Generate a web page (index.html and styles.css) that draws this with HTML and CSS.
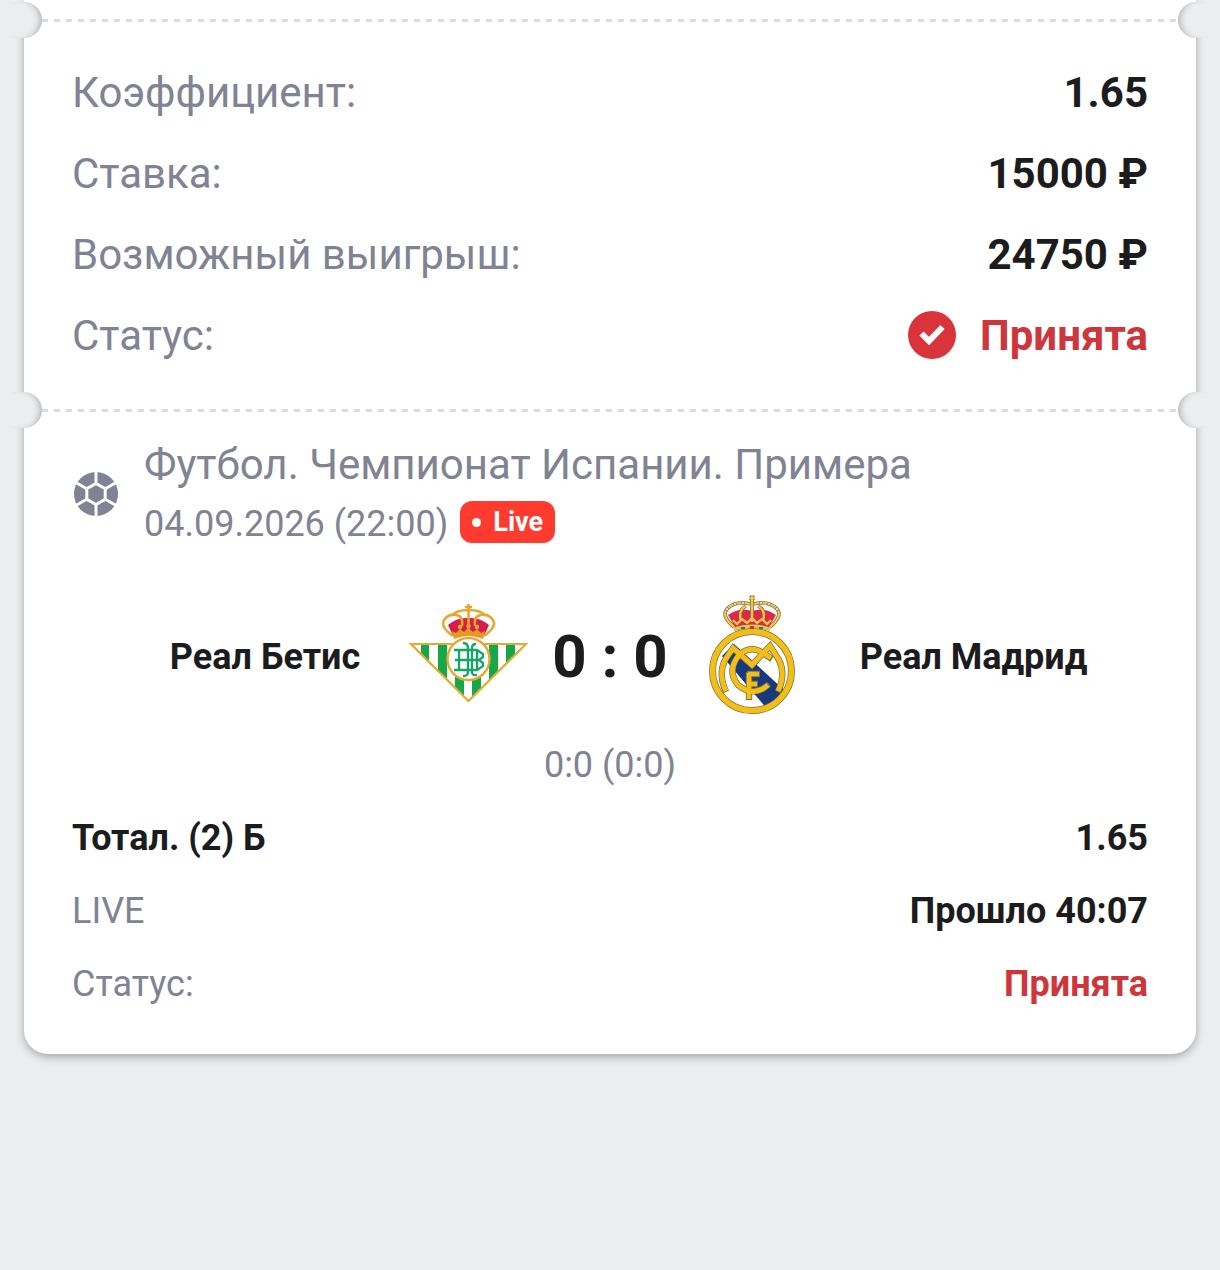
FILE: index.html
```html
<!DOCTYPE html>
<html lang="ru">
<head>
    <meta charset="UTF-8">
    <meta name="viewport" content="width=device-width, initial-scale=1.0">
    <title>Купон</title>
    <link rel="stylesheet" href="styles.css">
</head>
<body>
    <main class="ticket">
        <div class="divider"></div>

        <dl class="summary">
            <div class="row"><dt>Коэффициент:</dt><dd>1.65</dd></div>
            <div class="row"><dt>Ставка:</dt><dd>15000 ₽</dd></div>
            <div class="row"><dt>Возможный выигрыш:</dt><dd>24750 ₽</dd></div>
            <div class="row">
                <dt>Статус:</dt>
                <dd class="accepted">
                    <svg class="check" viewBox="0 0 48 48" aria-hidden="true">
                        <circle cx="24" cy="24" r="24" fill="#d9343a"/>
                        <path d="M13.500 22.500l7.500 7.500L34.500 16" fill="none" stroke="#fff" stroke-width="6"/>
                    </svg>
                    Принята
                </dd>
            </div>
        </dl>

        <div class="divider"></div>

        <section class="event">
            <header class="event-head">
                <svg class="ball" viewBox="0 0 48 48" aria-hidden="true">
                    <circle cx="24" cy="24" r="22" fill="#7f8393"/>
                    <g fill="none" stroke="#fff" stroke-width="3">
                        <path d="M24 13.500l9.200 5.200v10.600L24 34.500l-9.200-5.200V18.700z"/>
                        <path d="M24 13.500V0M33.200 18.700L46 11.500M33.200 29.300L46 36.500M24 34.500V48M14.800 29.300L2 36.500M14.800 18.700L2 11.500"/>
                    </g>
                </svg>
                <div class="event-info">
                    <div class="league">Футбол. Чемпионат Испании. Примера</div>
                    <div class="date">04.09.2026 (22:00) <span class="live">Live</span></div>
                </div>
            </header>

            <div class="match">
                <div class="team home">
                    <span class="name">Реал Бетис</span>
                    <svg class="crest" viewBox="0 0 120 120" aria-hidden="true">
                        <defs>
                            <clipPath id="pennant"><path d="M3 50H118L60.500 107z"/></clipPath>
                        </defs>
                        <path d="M3 50H118L60.500 107z" fill="#fff"/>
                        <path clip-path="url(#pennant)" fill="#14a84b" d="M13 50h8v58h-8zM30 50h9v58h-9zM47 50h9v58h-9zM64 50h9v58h-9zM81 50h9v58h-9zM98 50h9v58h-9z"/>
                        <path d="M3 50H118L60.500 107z" fill="none" stroke="#e5a932" stroke-width="2.200"/>
                        <circle cx="60.500" cy="65" r="21" fill="#fff" stroke="#e5a932" stroke-width="2.400"/>
                        <g fill="none" stroke="#14a567" stroke-width="2.300">
                            <path d="M46 56H69L75 60V63L71 66L75 69V72L69 76H46M47 66H71"/>
                            <path d="M51 56V76M55 49Q60 49 60 54V78Q60 82 55 82M68 50Q64 50 64 54V78Q64 82 69 81M69 56V76"/>
                        </g>
                        <path d="M40 31Q49 23 60.500 24Q72 23 81 31L76 42Q60 38 45 42z" fill="#d81e48"/>
                        <g fill="none" stroke="#e5a932" stroke-width="2.600">
                            <path d="M45 42Q32 33 36 26Q42 18 51 22Q55 24 54 32M76 42Q89 33 85 26Q79 18 70 22Q66 24 67 32"/>
                            <path d="M43 22Q48 16 60.500 16Q73 16 78 22M60.500 10V37M57 13H64"/>
                        </g>
                        <path d="M44 37l4 2 4-4 4 3 4-4 5 4 4-3 4 4 4-2-2 8Q60 39 46 45z" fill="#e39b24"/>
                        <g fill="#e5a932">
                            <circle cx="52" cy="33" r="2.200"/><circle cx="60.500" cy="32" r="2.200"/><circle cx="69" cy="33" r="2.200"/><circle cx="60.500" cy="16" r="2"/>
                        </g>
                    </svg>
                </div>
                <div class="score">0 : 0</div>
                <div class="team away">
                    <svg class="crest" viewBox="0 0 120 120" aria-hidden="true">
                        <defs>
                            <clipPath id="disc"><circle cx="60" cy="77" r="37"/></clipPath>
                        </defs>
                        <circle cx="60" cy="77" r="38" fill="#fff"/>
                        <path clip-path="url(#disc)" fill="#17397f" d="M30 62L42 50L92 96L76 116z"/>
                        <circle cx="60" cy="77" r="39.500" fill="none" stroke="#77704c" stroke-width="7"/>
                        <circle cx="60" cy="77" r="39.500" fill="none" stroke="#f3bf16" stroke-width="5.600"/>
                        <!-- monogram: dark contour first, gold on top -->
                        <g fill="none" stroke="#77704c" stroke-width="6.400">
                            <path d="M34 98Q26 80 33 66L41 54L60 71L78 52L87 66Q94 80 86 98"/>
                            <path d="M80 65L71 59Q60 51 48 60Q34 76 46 91Q62 104 77 90"/>
                            <path d="M57 78V106M55 80H68M57 90H66"/>
                        </g>
                        <g fill="none" stroke="#f3bf16" stroke-width="5">
                            <path d="M34 97Q26 80 33 66L41 54L60 71L78 52L87 66Q94 80 86 97"/>
                            <path d="M79 64L71 59Q60 51 48 60Q34 76 46 91Q62 104 76 91"/>
                            <path d="M57 79V105M56 80H67M57 90H65" stroke-width="4.600"/>
                        </g>
                        <path d="M36 21Q47 13 60 17Q73 13 84 21L77 33H43z" fill="#dc2945"/>
                        <g fill="none" stroke="#81683d" stroke-width="3.600">
                            <path d="M42 33Q29 22 35 15Q44 6 58 10M78 33Q91 22 85 15Q76 6 62 10M49 27Q46 16 54 12M71 27Q74 16 66 12M60 1V28M57 4H63M42 35Q60 29 78 35"/>
                        </g>
                        <g fill="none" stroke="#efc34c" stroke-width="2.300">
                            <path d="M42 33Q29 22 35 15Q44 6 58 10M78 33Q91 22 85 15Q76 6 62 10M49 27Q46 16 54 12M71 27Q74 16 66 12M60 1V28M57 4H63"/>
                            <path d="M42 35Q60 29 78 35" stroke-width="3"/>
                            <path d="M41 26l4 4 5-5 5 4 5-5 5 5 5-4 5 5 4-4"/>
                        </g>
                        <g fill="#fff" stroke="#9b8250">
                            <circle cx="35" cy="15" r="1.500"/><circle cx="43" cy="10" r="1.500"/><circle cx="51" cy="9" r="1.500"/><circle cx="69" cy="9" r="1.500"/><circle cx="77" cy="10" r="1.500"/><circle cx="85" cy="15" r="1.500"/>
                        </g>
                        <path d="M58 32h4v3h-4z" fill="#cf2d3c"/>
                        <path d="M49 33h4v2h-4zM67 33h4v2h-4z" fill="#28815a"/>
                    </svg>
                    <span class="name">Реал Мадрид</span>
                </div>
            </div>

            <div class="periods">0:0 (0:0)</div>

            <dl class="bet">
                <div class="row"><dt class="market">Тотал. (2) Б</dt><dd>1.65</dd></div>
                <div class="row"><dt>LIVE</dt><dd>Прошло 40:07</dd></div>
                <div class="row"><dt>Статус:</dt><dd class="accepted">Принята</dd></div>
            </dl>
        </section>
    </main>
</body>
</html>
```
FILE: styles.css
```css
* {
    box-sizing: border-box;
}
body {
    margin: 0;
    padding: 0 24px 48px;
    background: #ebedef;
    color: #1c1c1e;
    font-family: Roboto, "Noto Sans", sans-serif;
    font-size: 36px;
    line-height: 43px;
}
dl, dd {
    margin: 0;
}
.ticket {
    padding-top: 2px;
    background: #fff;
    border-radius: 0 0 24px 24px;
    box-shadow: 0 3px 8px rgba(0, 0, 0, 0.3);
}

/* perforated line with a notch at each end */
.divider {
    position: relative;
    height: 36px;
    background: repeating-linear-gradient(90deg, #dcdcde 0 6px, transparent 6px 12px) 18px 50% / calc(100% - 36px) 3px no-repeat;
}
.divider::before, .divider::after {
    content: "";
    position: absolute;
    top: 0;
    width: 30px;
    height: 36px;
    background: #ebedef;
}
.divider::before {
    left: -12px;
    border-radius: 0 18px 18px 0;
    box-shadow: inset -6px 0 6px -4px rgba(0, 0, 0, 0.25);
}
.divider::after {
    right: -12px;
    border-radius: 18px 0 0 18px;
    box-shadow: inset 6px 0 6px -4px rgba(0, 0, 0, 0.25);
}

.summary {
    display: flex;
    flex-direction: column;
    gap: 32px;
    padding: 30px 48px 32px;
    font-size: 42px;
    line-height: 49px;
}
.row {
    display: flex;
    justify-content: space-between;
}
.row dt {
    color: #7f8393;
}
.row dd {
    font-weight: 700;
}
.row .market {
    color: #1c1c1e;
    font-weight: 700;
}
.row .accepted {
    display: flex;
    gap: 24px;
    color: #cd363b;
}
.check {
    width: 48px;
    height: 48px;
}

.event {
    padding: 12px 48px 48px;
}
.event-head {
    display: flex;
    align-items: center;
    gap: 24px;
    color: #7f8393;
}
.ball {
    flex: none;
    width: 48px;
    height: 48px;
}
.league {
    font-size: 42px;
    line-height: 49px;
}
.date {
    display: flex;
    align-items: flex-start;
    gap: 12px;
    margin-top: 12px;
    line-height: 46px;
}
.live {
    display: flex;
    align-items: center;
    gap: 12px;
    height: 42px;
    padding: 0 12px;
    border-radius: 12px;
    background: #ff3b30;
    color: #fff;
    font-size: 27px;
    font-weight: 700;
}
.live::before {
    content: "";
    width: 9px;
    height: 9px;
    border-radius: 50%;
    background: #fff;
}

.match {
    display: grid;
    grid-template-columns: 1fr auto 1fr;
    align-items: center;
    margin-top: 47px;
    font-weight: 700;
}
.team {
    display: flex;
    align-items: center;
    gap: 48px;
}
.home {
    justify-content: flex-end;
}
.name {
    padding-top: 6px;
}
.crest {
    flex: none;
    width: 120px;
    height: 120px;
}
.score {
    padding: 6px 24px 0;
    font-size: 60px;
    line-height: 72px;
}
.periods {
    margin: 30px 0;
    color: #7f8393;
    text-align: center;
}
.bet {
    display: flex;
    flex-direction: column;
    gap: 30px;
}
```
